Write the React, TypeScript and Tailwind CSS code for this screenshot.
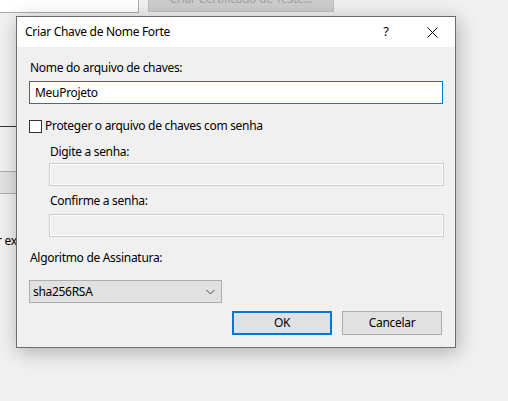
const font = { fontFamily: '"Segoe UI", "Noto Sans", sans-serif' };

function Label({ children, className = '' }: { children: React.ReactNode; className?: string }) {
  return <div className={`h-4 text-[12px] leading-4 text-black ${className}`}>{children}</div>;
}

function DisabledBox({ className = '' }: { className?: string }) {
  return (
    <div className={`h-[23px] border border-[#cccccc] bg-[#f0f0f0] shadow-[inset_0_0_0_1px_#ffffff] ${className}`} />
  );
}

export default function App() {
  return (
    <div
      className="relative h-[401px] w-[508px] overflow-hidden bg-[#f0f0f0] text-[12px] tracking-[-0.3px]"
      style={font}
    >
      {/* window behind the dialog */}
      <div className="absolute left-0 top-0 h-[13px] w-[139px] border-b border-r border-[#adadad] bg-white" />
      <div className="absolute left-[148px] top-[-15px] flex h-[27px] w-[186px] items-center justify-center border border-[#bfbfbf] bg-[#cccccc] text-[#a0a0a0]">
        Criar Certificado de Teste...
      </div>
      <div className="absolute left-0 top-[126px] h-px w-[16px] bg-[#333333]" />
      <div className="absolute left-0 top-[171px] h-[23px] w-[16px] border-y border-[#adadad] bg-[#e1e1e1]" />
      <div className="absolute left-[-3px] top-[232px] text-black">r ex</div>

      {/* dialog */}
      <div className="absolute left-[16px] top-[16px] flex h-[332px] w-[440px] flex-col border border-[#6d6d6d] bg-[#f0f0f0] shadow-[2px_4px_18px_rgba(0,0,0,0.28)]">
        <div className="flex h-[30px] items-center bg-white pl-2 text-black">
          <span className="flex-1">Criar Chave de Nome Forte</span>
          <span className="w-[46px] text-center text-[13px]">?</span>
          <span className="flex w-[46px] items-center justify-center">
            <svg width="11" height="11" viewBox="0 0 11 11" fill="none">
              <path d="M0.5 0.5 L10.5 10.5 M10.5 0.5 L0.5 10.5" stroke="#000" strokeWidth="1" />
            </svg>
          </span>
        </div>

        <div className="flex flex-col px-3 pt-[13px]">
          <Label className="pl-[1px]">Nome do arquivo de chaves:</Label>
          <div className="mt-[5px] flex h-[23px] items-center border border-[#0078d7] bg-white pl-[5px] text-black">
            MeuProjeto
          </div>

          <div className="mt-[14px] flex h-4 items-center gap-[3px]">
            <span className="h-[13px] w-[13px] border border-[#333333] bg-white" />
            <span className="leading-4">Proteger o arquivo de chaves com senha</span>
          </div>

          <div className="flex flex-col pl-5">
            <Label className="mt-[10px] pl-[1px]">Digite a senha:</Label>
            <DisabledBox className="mt-[3px] mr-[-1px]" />
            <Label className="mt-[7px] pl-[1px]">Confirme a senha:</Label>
            <DisabledBox className="mt-[5px] mr-[-1px]" />
          </div>

          <Label className="mt-[13px] pl-[1px]">Algoritmo de Assinatura:</Label>
          <div className="mt-[14px] flex h-[23px] w-[193px] items-center justify-between border border-[#adadad] bg-[#e1e1e1] pl-[3px] pr-[6px] text-black">
            <span>sha256RSA</span>
            <svg width="9" height="6" viewBox="0 0 9 6" fill="none">
              <path d="M0.5 1 L4.5 5 L8.5 1" stroke="#444" strokeWidth="1" />
            </svg>
          </div>

          <div className="mt-2 flex justify-end gap-[10px] pr-px">
            <button className="h-6 w-[100px] border-2 border-[#0078d7] bg-[#e1e1e1] text-black">OK</button>
            <button className="h-6 w-[100px] border border-[#adadad] bg-[#e1e1e1] text-black">Cancelar</button>
          </div>
        </div>
      </div>
    </div>
  );
}
